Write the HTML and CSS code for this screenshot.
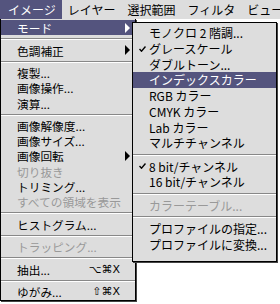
FILE: index.html
```html
<!DOCTYPE html>
<html lang="ja">
  <head>
    <meta charset="UTF-8">
    <title>イメージ メニュー</title>
    <link rel="stylesheet" href="styles.css">
  </head>
  <body>
    <div class="menubar">
      <span class="title active">イメージ</span>
      <span class="title">レイヤー</span>
      <span class="title">選択範囲</span>
      <span class="title">フィルタ</span>
      <span class="title">ビュー</span>
    </div>

    <div class="menus">
      <ul class="menu main">
        <li class="item active">モード<span class="arrow"></span></li>
        <li class="sep"></li>
        <li class="item">色調補正<span class="arrow"></span></li>
        <li class="sep"></li>
        <li class="item">複製...</li>
        <li class="item">画像操作...</li>
        <li class="item">演算...</li>
        <li class="sep"></li>
        <li class="item">画像解像度...</li>
        <li class="item">画像サイズ...</li>
        <li class="item">画像回転<span class="arrow"></span></li>
        <li class="item disabled">切り抜き</li>
        <li class="item">トリミング...</li>
        <li class="item disabled">すべての領域を表示</li>
        <li class="sep"></li>
        <li class="item">ヒストグラム...</li>
        <li class="sep"></li>
        <li class="item disabled">トラッピング...</li>
        <li class="sep"></li>
        <li class="item">抽出...<span class="key">⌥⌘X</span></li>
        <li class="sep"></li>
        <li class="item">ゆがみ...<span class="key">⇧⌘X</span></li>
      </ul>

      <!-- submenu of モード -->
      <ul class="menu sub">
        <li class="item">モノクロ 2 階調...</li>
        <li class="item"><svg class="check" width="7" height="6" viewBox="0 0 7 6"><polyline points="0.5,3 2.5,5.2 6.5,0.5" fill="none" stroke="#000" stroke-width="1.4"/></svg>グレースケール</li>
        <li class="item">ダブルトーン...</li>
        <li class="item active">インデックスカラー</li>
        <li class="item">RGB カラー</li>
        <li class="item">CMYK カラー</li>
        <li class="item">Lab カラー</li>
        <li class="item">マルチチャンネル</li>
        <li class="sep"></li>
        <li class="item"><svg class="check" width="7" height="6" viewBox="0 0 7 6"><polyline points="0.5,3 2.5,5.2 6.5,0.5" fill="none" stroke="#000" stroke-width="1.4"/></svg>8 bit/チャンネル</li>
        <li class="item">16 bit/チャンネル</li>
        <li class="sep"></li>
        <li class="item disabled">カラーテーブル...</li>
        <li class="sep"></li>
        <li class="item">プロファイルの指定...</li>
        <li class="item">プロファイルに変換...</li>
      </ul>
    </div>
  </body>
</html>
```

FILE: styles.css
```css
body {
    margin: 0;
    background: #ffffff;
    font-family: "Noto Sans CJK JP", "Noto Sans", sans-serif;
    font-size: 12px;
    color: #000;
    width: 280px;
    height: 304px;
    overflow: hidden;
}
.menubar {
    display: flex;
    height: 19px;
    line-height: 19px;
    background: #dddddd;
    white-space: nowrap;
    overflow: hidden;
}
.title {
    padding: 0 6px;
}
.title:first-child {
    padding-left: 8px;
}
.title:last-child {
    padding-right: 0;
}
.title.active {
    background: #54547e;
    color: #fff;
}
.menus {
    position: relative;
}
.menu {
    list-style: none;
    margin: 0;
    background: #dddddd;
    border: 1px solid #000;
    box-shadow: 1px 1px 0 #444;
    box-sizing: border-box;
}
.main {
    width: 136px;
    padding: 1px 0 0;
    border-top: none;
    font-size: 11.7px;
}
.sub {
    position: absolute;
    left: 132px;
    top: 3px;
    width: 145px;
    padding: 2px 0 9px;
}
.item {
    display: flex;
    align-items: center;
    height: 15.2px;
    line-height: 15.2px;
    padding: 0 5px 0 16px;
    white-space: nowrap;
}
.sub .item {
    height: 15.75px;
    line-height: 15.75px;
    padding-left: 16px;
}
.item.active {
    background: #54547e;
    color: #fff;
}
.item.disabled {
    color: #999;
}
.sep {
    margin: 3px 0 2.4px;
    border-top: 1px solid #888;
    border-bottom: 1px solid #fff;
}
.sub .sep {
    margin-bottom: 2.5px;
}
.arrow {
    margin-left: auto;
    border-left: 5px solid currentColor;
    border-top: 5px solid transparent;
    border-bottom: 5px solid transparent;
}
.key {
    margin-left: auto;
    margin-right: 10px;
    font-family: "DejaVu Sans", sans-serif;
    font-size: 11px;
}
.check {
    margin-left: -10px;
    margin-right: 3px;
}
```
